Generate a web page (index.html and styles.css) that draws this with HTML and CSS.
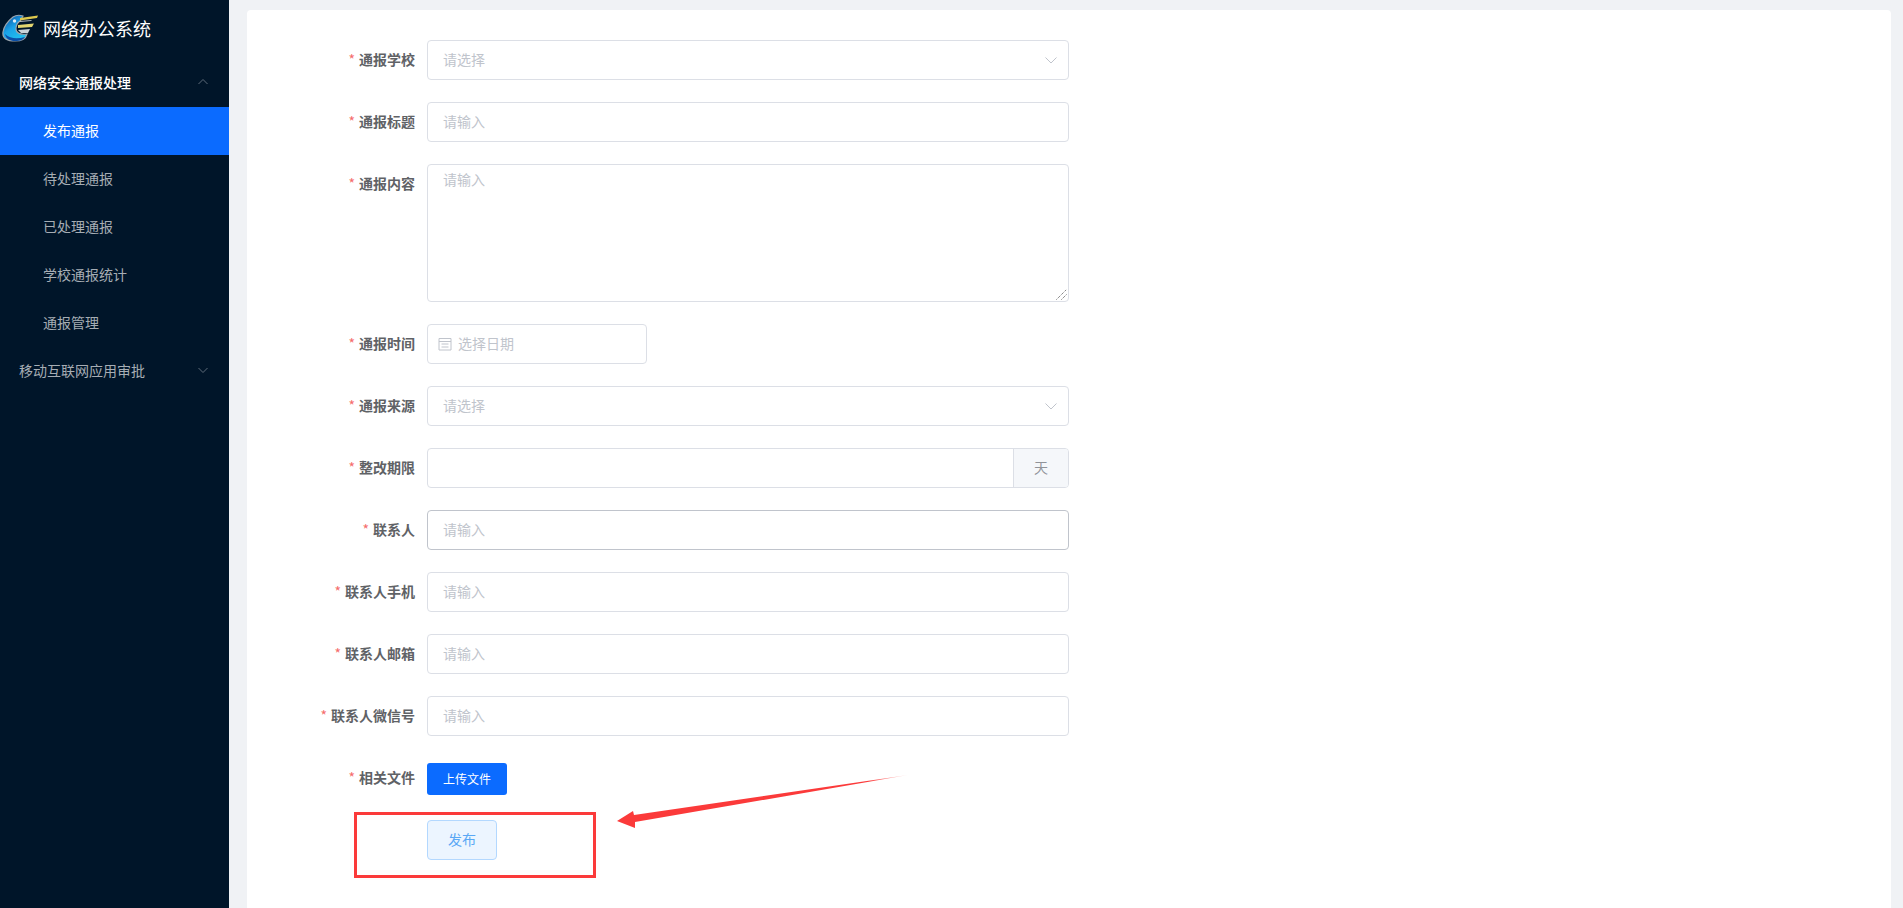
FILE: index.html
```html
<!DOCTYPE html>
<html lang="zh-CN">
<head>
<meta charset="utf-8">
<title>网络办公系统</title>
<link rel="stylesheet" href="styles.css">
</head>
<body>
<div class="app">
  <aside class="sidebar">
    <div class="brand">
      <svg class="logo" viewBox="0 0 36 28" width="36" height="28">
        <defs>
          <linearGradient id="blue" x1="0" x2="0.6" y1="0.1" y2="1">
            <stop offset="0" stop-color="#0d4f9e"/>
            <stop offset="0.5" stop-color="#1aa3e8"/>
            <stop offset="1" stop-color="#23c0ee"/>
          </linearGradient>
        </defs>
        <path d="M11 3 C14 1 18 1 21 2 L18 7 C15 9 14 12 14 15 C14 19 18 21 25 20 C24 24 21 27 13 27 C6 27 0 25 1 18 C2 12 6 7 11 3 Z" fill="url(#blue)" stroke="#9aa5ae" stroke-width="1.2"/>
        <path d="M3 20 C8 25 16 25 23 23 C21 26 18 27 13 27 C8 27 4 25 3 20 Z" fill="#0a4fa8"/>
        <circle cx="12.5" cy="7" r="1.7" fill="#dcecf7"/>
        <path d="M18 4 L36 1.5 L35 4 L18 6.5 Z" fill="#dcc84e"/>
        <path d="M17 7 L30 6 L29 7 L18 8 Z" fill="#aeb6bc"/>
        <path d="M16 11 L32 9.5 L30 13 L16 14 Z" fill="#e2d670"/>
        <path d="M16 16 L28 15 L26 19 L19 19 Z" fill="#c9d2d9"/>
      </svg>
      <span class="brand-name">网络办公系统</span>
    </div>
    <div class="menu-parent open">
      <span>网络安全通报处理</span>
      <svg class="chev" viewBox="0 0 12 12" width="12" height="12"><path d="M1.5 8 L6 3.5 L10.5 8" fill="none" stroke="currentColor" stroke-width="1"/></svg>
    </div>
    <div class="menu-item active">发布通报</div>
    <div class="menu-item">待处理通报</div>
    <div class="menu-item">已处理通报</div>
    <div class="menu-item">学校通报统计</div>
    <div class="menu-item">通报管理</div>
    <div class="menu-parent">
      <span>移动互联网应用审批</span>
      <svg class="chev" viewBox="0 0 12 12" width="12" height="12"><path d="M1.5 4 L6 8.5 L10.5 4" fill="none" stroke="currentColor" stroke-width="1"/></svg>
    </div>
  </aside>
  <main class="main">
    <div class="card">
      <form class="form">
        <div class="row">
          <label class="label req">通报学校</label>
          <div class="field select"><span class="ph">请选择</span>
            <svg class="select-chev" viewBox="0 0 14 14" width="14" height="14"><path d="M1.5 4.5 L7 10 L12.5 4.5" fill="none" stroke="currentColor" stroke-width="1"/></svg>
          </div>
        </div>
        <div class="row">
          <label class="label req">通报标题</label>
          <div class="field"><span class="ph">请输入</span></div>
        </div>
        <div class="row">
          <label class="label req">通报内容</label>
          <div class="field area"><span class="ph">请输入</span>
            <svg class="grip" viewBox="0 0 11 11" width="11" height="11"><path d="M0.5 10.5 L10.5 0.5 M5.5 10.5 L10.5 5.5" fill="none" stroke="#555" stroke-width="1" stroke-dasharray="1 1"/></svg>
          </div>
        </div>
        <div class="row">
          <label class="label req">通报时间</label>
          <div class="field date">
            <svg class="cal" viewBox="0 0 14 14" width="14" height="14"><path d="M1 1.5 H13 V13 H1 Z M1 4.5 H13 M3.5 7 H10.5 M3.5 10 H10.5" fill="none" stroke="currentColor" stroke-width="1"/></svg>
            <span class="ph">选择日期</span>
          </div>
        </div>
        <div class="row">
          <label class="label req">通报来源</label>
          <div class="field select"><span class="ph">请选择</span>
            <svg class="select-chev" viewBox="0 0 14 14" width="14" height="14"><path d="M1.5 4.5 L7 10 L12.5 4.5" fill="none" stroke="currentColor" stroke-width="1"/></svg>
          </div>
        </div>
        <div class="row">
          <label class="label req">整改期限</label>
          <div class="field group"><span class="group-main"></span><span class="append">天</span></div>
        </div>
        <div class="row">
          <label class="label req">联系人</label>
          <div class="field focus"><span class="ph">请输入</span></div>
        </div>
        <div class="row">
          <label class="label req">联系人手机</label>
          <div class="field"><span class="ph">请输入</span></div>
        </div>
        <div class="row">
          <label class="label req">联系人邮箱</label>
          <div class="field"><span class="ph">请输入</span></div>
        </div>
        <div class="row">
          <label class="label req">联系人微信号</label>
          <div class="field"><span class="ph">请输入</span></div>
        </div>
        <div class="row">
          <label class="label req">相关文件</label>
          <button type="button" class="btn-upload">上传文件</button>
        </div>
        <div class="row">
          <span class="label"></span>
          <button type="button" class="btn-submit">发布</button>
        </div>
      </form>
      <div class="callout-box"></div>
      <svg class="callout-arrow" viewBox="0 0 300 60" width="300" height="60">
        <defs><linearGradient id="fade" gradientUnits="userSpaceOnUse" x1="0" x2="292" y1="0" y2="0"><stop offset="0.86" stop-color="#fb3a3a"/><stop offset="1" stop-color="#fb3a3a" stop-opacity="0.15"/></linearGradient></defs>
        <path d="M0 47 L16 37 L17 41 L291 1 L18 48 L18 54 Z" fill="url(#fade)"/>
      </svg>
    </div>
  </main>
</div>
</body>
</html>
```
FILE: styles.css
```css
* { box-sizing: border-box; }
html, body { margin: 0; height: 100%; overflow: hidden; }
body {
  font-family: "Noto Sans CJK SC", "Liberation Sans", sans-serif;
  font-size: 14px;
  background: #f0f2f5;
  color: #606266;
}
.app { display: flex; height: 908px; }
.sidebar { width: 229px; flex: none; background: #001529; color: #a6adb4; }
.brand { display: flex; align-items: center; height: 59px; padding: 0 0 3px 2px; }
.logo { flex: none; margin-right: 5px; filter: blur(0.4px); }
.brand-name { color: #fff; font-size: 18px; padding-bottom: 1px; }
.menu-parent {
  display: flex; align-items: center; justify-content: space-between;
  height: 48px; padding: 0 20px 2px 19px; color: #a6adb4;
}
.menu-parent.open { color: #fff; font-weight: 500; }
.chev { color: #5f6c7a; }
.menu-item { height: 48px; line-height: 46px; padding-left: 43px; }
.menu-item.active { background: #0b6bff; color: #fff; }
.main { flex: 1; padding: 10px 12px 0 18px; min-width: 0; }
.card { position: relative; height: 100%; background: #fff; border-radius: 4px 4px 0 0; padding-top: 30px; }
.form { display: flex; flex-direction: column; gap: 22px; }
.row { display: flex; align-items: flex-start; }
.label {
  flex: none; width: 180px; padding-right: 12px; text-align: right;
  height: 40px; line-height: 38px; font-weight: 700; color: #606266;
}
.req::before { content: "*"; color: #f56c6c; margin-right: 4px; font-weight: 400; }
.field {
  position: relative; display: flex; align-items: center;
  width: 642px; height: 40px; padding: 0 15px 2px;
  border: 1px solid #dcdfe6; border-radius: 4px; background: #fff;
}
.ph { color: #c0c4cc; }
.select-chev { position: absolute; right: 10px; top: 12px; color: #c0c4cc; }
.area { height: 138px; align-items: flex-start; padding-top: 4px; }
.grip { position: absolute; right: 1px; bottom: 1px; }
.date { width: 220px; padding: 0 10px 2px; gap: 6px; }
.cal { color: #c0c4cc; flex: none; margin-top: 2px; }
.group { padding: 0; overflow: hidden; }
.group-main { flex: 1; }
.append {
  width: 55px; height: 100%; display: flex; align-items: center; justify-content: center;
  background: #f5f7fa; border-left: 1px solid #dcdfe6; color: #909399; padding-bottom: 2px;
}
.focus { border-color: #c0c4cc; }
.btn-upload {
  width: 80px; height: 32px; margin-top: 5px; border: 0; border-radius: 3px; background: #0b6bff;
  color: #fff; font: inherit; font-size: 12px; padding: 0 0 1px;
}
.btn-submit {
  width: 70px; height: 40px; border: 1px solid #b3d8ff; border-radius: 4px;
  background: #ecf5ff; color: #5aa8f5; font: inherit; padding: 0 0 2px;
}
.callout-box {
  position: absolute; left: 107px; top: 802px; width: 242px; height: 66px;
  border: 3px solid #fb3a3a;
}
.callout-arrow { position: absolute; left: 370px; top: 764px; }
```
